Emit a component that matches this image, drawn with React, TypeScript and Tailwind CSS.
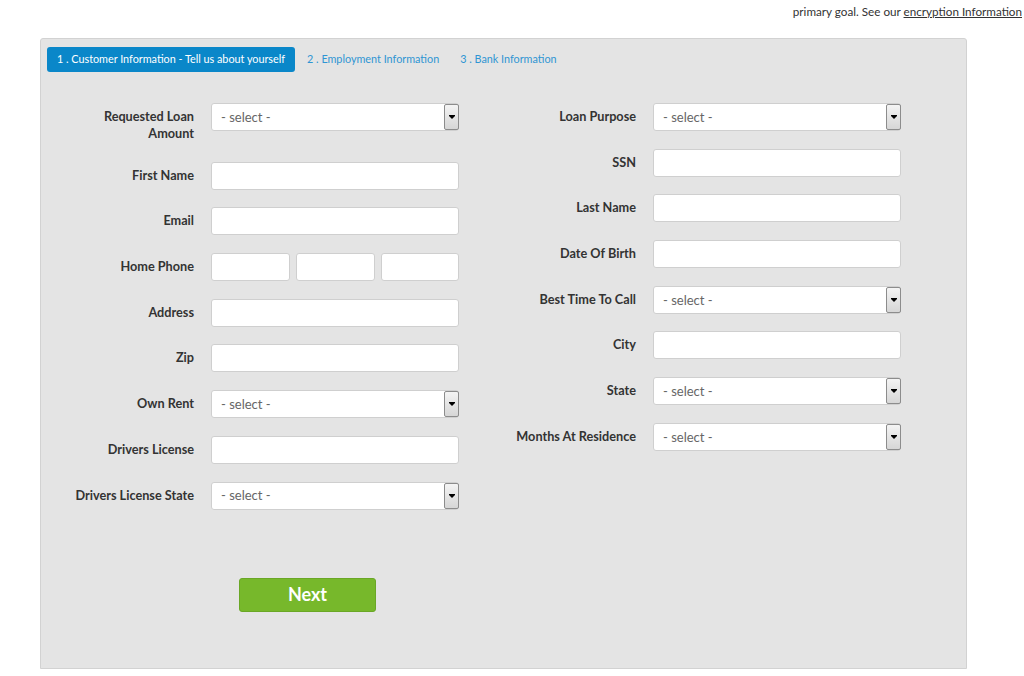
import React from 'react';

const font = { fontFamily: 'Lato, "Open Sans", sans-serif' };

type Field = { label: string; kind: 'text' | 'select' | 'phone' };

const leftFields: Field[] = [
  { label: 'Requested Loan Amount', kind: 'select' },
  { label: 'First Name', kind: 'text' },
  { label: 'Email', kind: 'text' },
  { label: 'Home Phone', kind: 'phone' },
  { label: 'Address', kind: 'text' },
  { label: 'Zip', kind: 'text' },
  { label: 'Own Rent', kind: 'select' },
  { label: 'Drivers License', kind: 'text' },
  { label: 'Drivers License State', kind: 'select' },
];

const rightFields: Field[] = [
  { label: 'Loan Purpose', kind: 'select' },
  { label: 'SSN', kind: 'text' },
  { label: 'Last Name', kind: 'text' },
  { label: 'Date Of Birth', kind: 'text' },
  { label: 'Best Time To Call', kind: 'select' },
  { label: 'City', kind: 'text' },
  { label: 'State', kind: 'select' },
  { label: 'Months At Residence', kind: 'select' },
];

const TextBox = ({ className = 'w-[248px]' }: { className?: string }) => (
  <div className={`h-[28px] bg-white border border-[#cfcfcf] rounded-[3px] ${className}`} />
);

const SelectBox = () => (
  <div className="h-[28px] w-[248px] bg-white border border-[#cfcfcf] rounded-[3px] flex items-center">
    <span className="flex-1 pl-[9px] pt-px text-[13px] text-[#666]">- select -</span>
    <div className="h-full w-[15px] border border-[#8c8c8c] rounded-[2px] bg-gradient-to-b from-[#f4f4f4] to-[#d6d6d6] flex items-center justify-center -mr-px">
      <div className="flex flex-col items-center">
        <div className="w-[6px] h-[1px] bg-black" />
        <div className="w-0 h-0 border-l-[3px] border-r-[3px] border-t-[3px] border-l-transparent border-r-transparent border-t-black" />
      </div>
    </div>
  </div>
);

const Row = ({ field }: { field: Field }) => (
  <div className="flex items-start gap-[17px]">
    <label className="w-[125px] text-right text-[12.7px] font-bold text-[#333] leading-[17px] pt-[5px] pb-[2px]">
      {field.label}
    </label>
    {field.kind === 'text' && <TextBox />}
    {field.kind === 'select' && <SelectBox />}
    {field.kind === 'phone' && (
      <div className="flex gap-[6px]">
        <TextBox className="w-[79px]" />
        <TextBox className="w-[79px]" />
        <TextBox className="w-[78px]" />
      </div>
    )}
  </div>
);

export default function App() {
  return (
    <div className="bg-white w-[1024px] h-[676px] overflow-hidden" style={font}>
      <div className="h-[38px] pr-[2px] pt-[3px] text-right text-[11.7px] text-[#333]">
        primary goal. See our <span className="underline">encryption Information</span>
      </div>
      <div className="ml-[40px] w-[927px] h-[631px] bg-[#e4e4e4] border border-[#d2d2d2] rounded-t-[3px] pt-[8px] px-[6px]">
        <div className="flex items-center text-[10.8px]">
          <div className="h-[25px] px-[10px] flex items-center bg-[#0a87c9] text-white rounded-[3px]">
            1 . Customer Information - Tell us about yourself
          </div>
          <div className="ml-[12px] text-[#2e95d3]">2 . Employment Information</div>
          <div className="ml-[21px] text-[#2e95d3]">3 . Bank Information</div>
        </div>
        <div className="flex mt-[31px] -ml-[6px]">
          <div className="flex flex-col gap-[17.7px] pl-[28px]">
            {leftFields.map((f) => (
              <Row key={f.label} field={f} />
            ))}
          </div>
          <div className="flex flex-col gap-[17.7px] ml-[52px]">
            {rightFields.map((f) => (
              <Row key={f.label} field={f} />
            ))}
          </div>
        </div>
        <button className="mt-[68px] ml-[192px] w-[137px] h-[34px] bg-[#77b82b] border border-[#6aa726] rounded-[3px] text-white text-[18px] font-bold">
          Next
        </button>
      </div>
    </div>
  );
}
